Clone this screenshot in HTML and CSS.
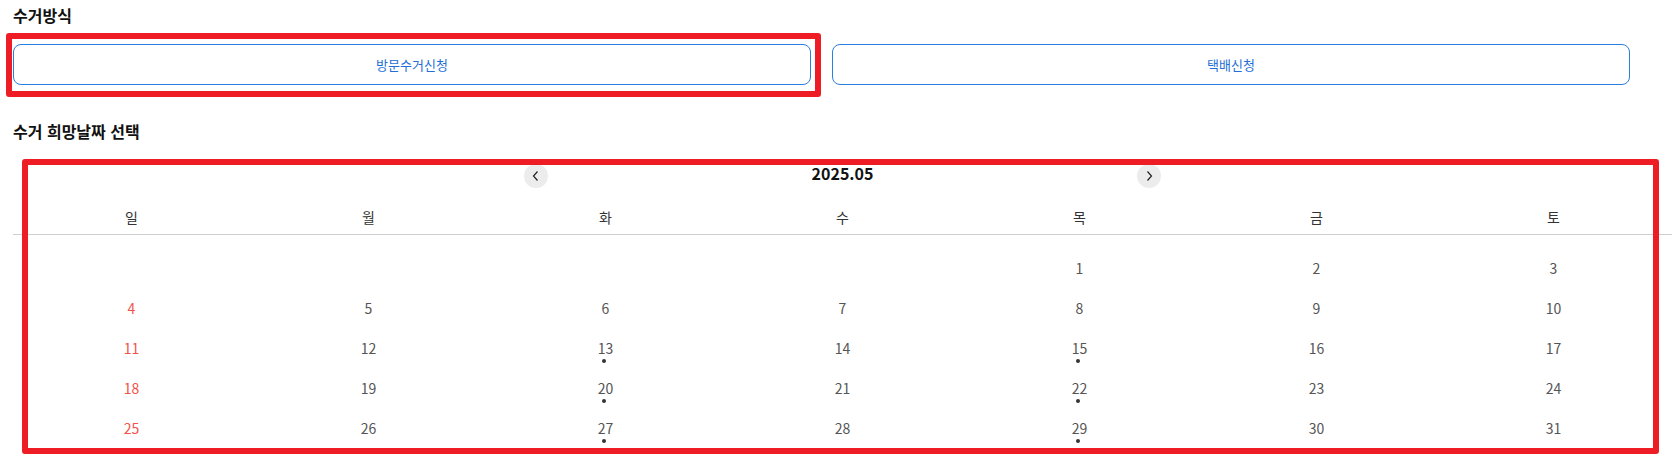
FILE: index.html
```html
<!DOCTYPE html>
<html lang="ko">
<head>
<meta charset="utf-8">
<title>수거 신청</title>
<link rel="stylesheet" href="styles.css">
</head>
<body>
<div class="page">
  <section class="method">
    <h2 class="title">수거방식</h2>
    <div class="method-buttons">
      <button class="method-btn" type="button">방문수거신청</button>
      <button class="method-btn" type="button">택배신청</button>
    </div>
  </section>

  <section class="date">
    <h2 class="title title-date">수거 희망날짜 선택</h2>
    <div class="calendar">
      <div class="cal-head">
        <button class="nav-btn" type="button" aria-label="이전 달">
          <svg width="24" height="24" viewBox="0 0 24 24"><path d="M13.5 7.5 L9.5 12 L13.5 16.5" fill="none" stroke="#222" stroke-width="1.2"/></svg>
        </button>
        <div class="cal-title">2025.05</div>
        <button class="nav-btn" type="button" aria-label="다음 달">
          <svg width="24" height="24" viewBox="0 0 24 24"><path d="M10.5 7.5 L14.5 12 L10.5 16.5" fill="none" stroke="#222" stroke-width="1.2"/></svg>
        </button>
      </div>
      <div class="cal-week">
        <span>일</span><span>월</span><span>화</span><span>수</span><span>목</span><span>금</span><span>토</span>
      </div>
      <div class="cal-grid">
        <div class="day"></div><div class="day"></div><div class="day"></div><div class="day"></div>
        <div class="day"><span class="num">1</span></div>
        <div class="day"><span class="num">2</span></div>
        <div class="day"><span class="num">3</span></div>

        <div class="day sun"><span class="num">4</span></div>
        <div class="day"><span class="num">5</span></div>
        <div class="day"><span class="num">6</span></div>
        <div class="day"><span class="num">7</span></div>
        <div class="day"><span class="num">8</span></div>
        <div class="day"><span class="num">9</span></div>
        <div class="day"><span class="num">10</span></div>

        <div class="day sun"><span class="num">11</span></div>
        <div class="day"><span class="num">12</span></div>
        <div class="day"><span class="num">13</span><i class="dot"></i></div>
        <div class="day"><span class="num">14</span></div>
        <div class="day"><span class="num">15</span><i class="dot"></i></div>
        <div class="day"><span class="num">16</span></div>
        <div class="day"><span class="num">17</span></div>

        <div class="day sun"><span class="num">18</span></div>
        <div class="day"><span class="num">19</span></div>
        <div class="day"><span class="num">20</span><i class="dot"></i></div>
        <div class="day"><span class="num">21</span></div>
        <div class="day"><span class="num">22</span><i class="dot"></i></div>
        <div class="day"><span class="num">23</span></div>
        <div class="day"><span class="num">24</span></div>

        <div class="day sun"><span class="num">25</span></div>
        <div class="day"><span class="num">26</span></div>
        <div class="day"><span class="num">27</span><i class="dot"></i></div>
        <div class="day"><span class="num">28</span></div>
        <div class="day"><span class="num">29</span><i class="dot"></i></div>
        <div class="day"><span class="num">30</span></div>
        <div class="day"><span class="num">31</span></div>
      </div>
    </div>
  </section>

  <div class="mark mark-method"></div>
  <div class="mark mark-calendar"></div>
</div>
</body>
</html>
```

FILE: styles.css
```css
* { box-sizing: border-box; }

html, body {
  margin: 0;
  padding: 0;
  background: #fff;
}

body {
  font-family: "Noto Sans CJK KR", "Noto Sans", sans-serif;
  color: #222;
}

.page {
  position: relative;
  padding: 3px 7px 0 13px;
  height: 459px;
  overflow: hidden;
}

.title {
  margin: 0;
  font-size: 16px;
  font-weight: 700;
  line-height: 24px;
  color: #111;
}

.method-buttons {
  display: grid;
  grid-template-columns: 1fr 1fr;
  column-gap: 21px;
  margin: 17px 42px 0 0;
}

.method-btn {
  height: 41px;
  border: 1px solid #2a7de1;
  border-radius: 8px;
  background: #fff;
  color: #1f6fd6;
  font-family: inherit;
  font-size: 13px;
  padding: 0;
}

.title-date {
  margin-top: 34px;
}

.calendar {
  margin-top: 19px;
}

.cal-head {
  display: flex;
  align-items: center;
  justify-content: space-between;
  width: 638px;
  height: 26px;
  margin: 0 auto;
}

.nav-btn {
  width: 24px;
  height: 24px;
  border-radius: 50%;
  border: 0;
  background: #ececec;
  padding: 0;
  display: flex;
  align-items: center;
  justify-content: center;
  margin-top: 2px;
}

.cal-title {
  font-size: 16px;
  font-weight: 700;
  line-height: 24px;
  color: #111;
  margin-top: -4px;
}

.cal-week {
  display: grid;
  grid-template-columns: repeat(7, 1fr);
  margin-top: 19px;
  padding-bottom: 7px;
  border-bottom: 1px solid #cfcfcf;
  font-size: 14px;
  line-height: 20px;
  color: #333;
  text-align: center;
}

.cal-grid {
  display: grid;
  grid-template-columns: repeat(7, 1fr);
  grid-auto-rows: 40px;
  padding-top: 13px;
}

.day {
  display: flex;
  flex-direction: column;
  align-items: center;
  padding-top: 10px;
  font-size: 14px;
  line-height: 20px;
  color: #555;
}

.day.sun {
  color: #f2524a;
}

.dot {
  width: 4px;
  height: 4px;
  border-radius: 50%;
  background: #333;
  margin: 1px 4px 0 0;
}

.mark {
  position: absolute;
  border: 6px solid #ee1d25;
  border-radius: 3px;
  pointer-events: none;
}

.mark-method {
  left: 6px;
  top: 33px;
  width: 815px;
  height: 64px;
}

.mark-calendar {
  left: 22px;
  top: 159px;
  width: 1637px;
  height: 295px;
}
```
